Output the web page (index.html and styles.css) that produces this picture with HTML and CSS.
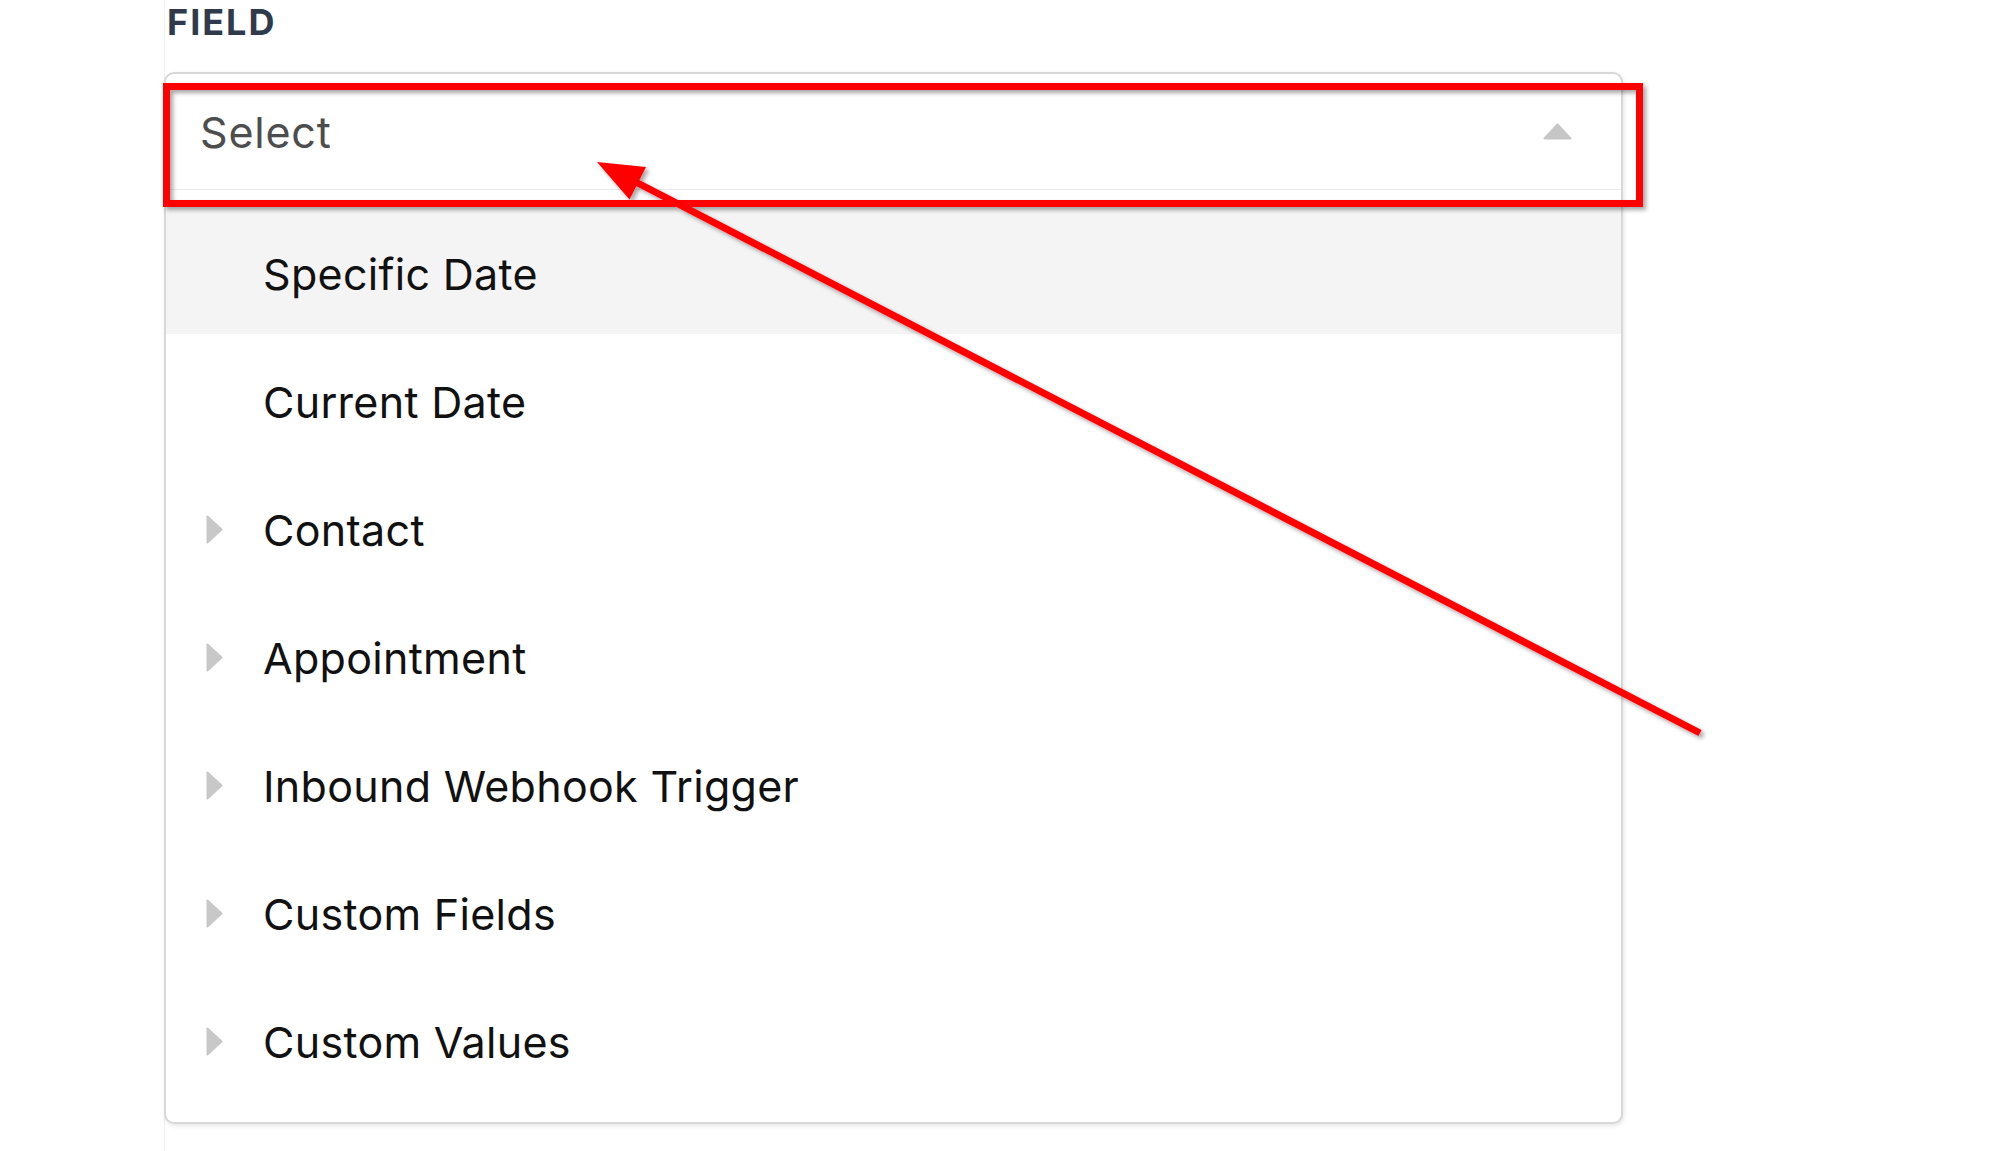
FILE: index.html
```html
<!DOCTYPE html>
<html lang="en">
<head>
  <meta charset="UTF-8" />
  <title>Field Select</title>
  <link rel="stylesheet" href="styles.css">
</head>
<body>
  <div class="panel">
    <div class="field-label">FIELD</div>

    <div class="dropdown">
      <div class="select-row">
        <span class="placeholder">Select</span>
        <svg class="caret" width="29" height="17" viewBox="0 0 29 17">
          <path d="M14.5 1.5 L27.5 15.5 L1.5 15.5 Z" fill="#c6c6c6" stroke="#c6c6c6" stroke-width="2" stroke-linejoin="round"/>
        </svg>
      </div>

      <ul class="options">
        <li class="option active"><span class="arrow"></span>Specific Date</li>
        <li class="option"><span class="arrow"></span>Current Date</li>
        <li class="option"><span class="arrow has-children"><svg width="17" height="29" viewBox="0 0 17 29"><path d="M1.5 1.5 L15.5 14.5 L1.5 27.5 Z" fill="#c8c8c8" stroke="#c8c8c8" stroke-width="2" stroke-linejoin="round"/></svg></span>Contact</li>
        <li class="option"><span class="arrow has-children"><svg width="17" height="29" viewBox="0 0 17 29"><path d="M1.5 1.5 L15.5 14.5 L1.5 27.5 Z" fill="#c8c8c8" stroke="#c8c8c8" stroke-width="2" stroke-linejoin="round"/></svg></span>Appointment</li>
        <li class="option"><span class="arrow has-children"><svg width="17" height="29" viewBox="0 0 17 29"><path d="M1.5 1.5 L15.5 14.5 L1.5 27.5 Z" fill="#c8c8c8" stroke="#c8c8c8" stroke-width="2" stroke-linejoin="round"/></svg></span>Inbound Webhook Trigger</li>
        <li class="option"><span class="arrow has-children"><svg width="17" height="29" viewBox="0 0 17 29"><path d="M1.5 1.5 L15.5 14.5 L1.5 27.5 Z" fill="#c8c8c8" stroke="#c8c8c8" stroke-width="2" stroke-linejoin="round"/></svg></span>Custom Fields</li>
        <li class="option"><span class="arrow has-children"><svg width="17" height="29" viewBox="0 0 17 29"><path d="M1.5 1.5 L15.5 14.5 L1.5 27.5 Z" fill="#c8c8c8" stroke="#c8c8c8" stroke-width="2" stroke-linejoin="round"/></svg></span>Custom Values</li>
      </ul>
    </div>
  </div>

  <!-- annotation drawn over the screenshot -->
  <svg class="annotation" width="2000" height="1151" viewBox="0 0 2000 1151">
    <defs>
      <filter id="shadow" x="-10%" y="-10%" width="120%" height="130%">
        <feDropShadow dx="3" dy="3" stdDeviation="2" flood-color="#000" flood-opacity="0.35"/>
      </filter>
    </defs>
    <g filter="url(#shadow)">
      <rect x="166.5" y="86.5" width="1473" height="117" fill="none" stroke="#ff0000" stroke-width="7"/>
      <line x1="1700" y1="733" x2="630" y2="179" stroke="#ff0000" stroke-width="7"/>
      <polygon points="597,162 646,167 629.5,199.5" fill="#ff0000"/>
    </g>
  </svg>
</body>
</html>
```

FILE: styles.css
```css
body {
  margin: 0;
  background: #ffffff;
  font-family: Inter, "Noto Sans", Arial, sans-serif;
}
.panel {
  margin-left: 164px;
  width: 1460px;
  height: 1151px;
  padding-top: 4px;
  box-sizing: border-box;
  border-left: 1px solid #f1f1f1;
}
.field-label {
  font-size: 36px;
  line-height: 1;
  font-weight: 700;
  letter-spacing: 2px;
  color: #2f3a4c;
  padding-left: 2px;
}
.dropdown {
  margin-top: 32px;
  margin-left: -1px;
  width: 1459px;
  box-sizing: border-box;
  border: 2px solid #d8d8d8;
  border-radius: 10px;
  background: #fff;
  box-shadow: 1px 2px 4px rgba(0, 0, 0, 0.10);
}
.select-row {
  height: 115px;
  display: flex;
  align-items: center;
  justify-content: space-between;
  padding: 0 49px 0 34px;
  border-bottom: 1px solid #ececec;
}
.placeholder {
  font-size: 43px;
  letter-spacing: 0.8px;
  color: #4d4d4d;
}
.caret {
  display: block;
}
.options {
  list-style: none;
  margin: 0;
  padding: 16px 0 20px;
}
.option {
  height: 128px;
  box-sizing: border-box;
  display: flex;
  align-items: center;
  padding: 7px 0 0 40px;
  font-size: 43px;
  letter-spacing: 0.3px;
  color: #111;
}
.option.active {
  background: #f4f4f4;
}
.arrow {
  width: 17px;
  height: 29px;
  margin-right: 40px;
  flex-shrink: 0;
}
.arrow svg {
  display: block;
}
.annotation {
  position: absolute;
  left: 0;
  top: 0;
  pointer-events: none;
}
```
